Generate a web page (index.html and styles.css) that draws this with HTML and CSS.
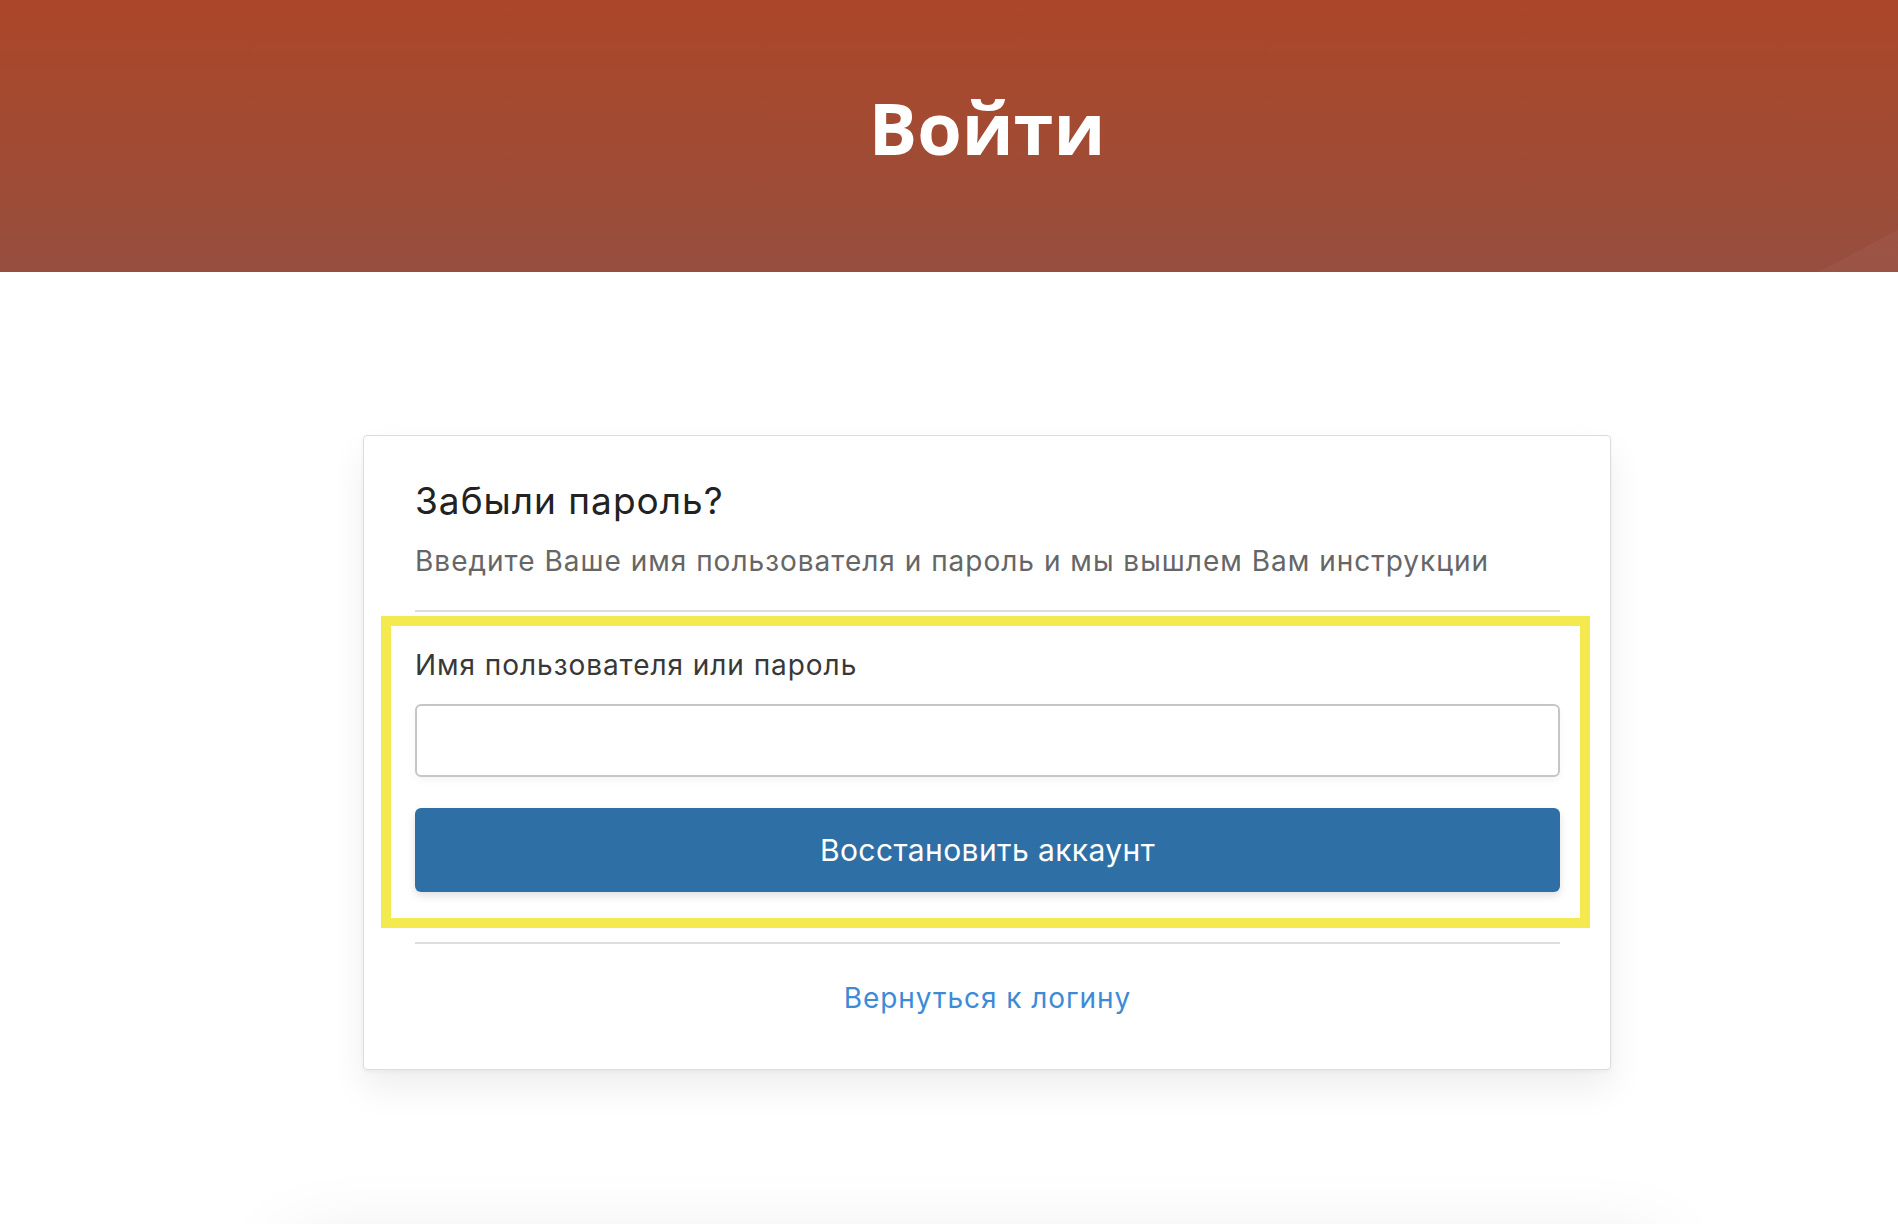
FILE: index.html
```html
<!DOCTYPE html>
<html lang="ru">
<head>
<meta charset="utf-8">
<title>Войти</title>
<link rel="stylesheet" href="styles.css">
</head>
<body>
<header class="banner">
  <h1 class="banner-title">Войти</h1>
</header>
<main class="page">
  <section class="card">
    <div class="card-head">
      <h2 class="card-title">Забыли пароль?</h2>
      <p class="card-sub">Введите Ваше имя пользователя и пароль и мы вышлем Вам инструкции</p>
    </div>
    <form class="recover">
      <label class="field-label" for="user">Имя пользователя или пароль</label>
      <input class="field-input" id="user" type="text">
      <button class="btn-primary" type="button">Восстановить аккаунт</button>
    </form>
    <div class="card-foot">
      <a class="back-link" href="#">Вернуться к логину</a>
    </div>
  </section>
</main>
<div class="page-foot"></div>
</body>
</html>
```
FILE: styles.css
```css
html, body {
  margin: 0;
  padding: 0;
  background: #ffffff;
}
body {
  font-family: Inter, "Open Sans", "Liberation Sans", sans-serif;
  overflow: hidden;
}
.banner {
  box-sizing: border-box;
  height: 272px;
  padding: 91px 0 0 76px;
  background:
    linear-gradient(152deg, rgba(255,255,255,0) 96.7%, rgba(255,255,255,0.035) 96.7%),
    linear-gradient(180deg, #ab4629 0%, #a24b33 50%, #964e3f 100%);
  text-align: center;
}
.banner-title {
  margin: 0;
  font-family: "Open Sans", sans-serif;
  font-weight: 700;
  font-size: 72px;
  line-height: 72px;
  color: #ffffff;
}
.page {
  padding: 163px 0 0 76px;
}
.card {
  box-sizing: border-box;
  width: 1248px;
  margin: 0 auto;
  padding: 0 50px 0 51px;
  background: #fff;
  border: 1px solid #dcdcdc;
  border-radius: 4px;
  box-shadow: 0 18px 36px rgba(0,0,0,0.07), 0 2px 4px rgba(0,0,0,0.04);
}
.card-head {
  padding: 43px 0 29px;
  border-bottom: 2px solid #dddddd;
}
.card-title {
  margin: 0;
  font-weight: 400;
  font-size: 37px;
  line-height: 44px;
  letter-spacing: 1px;
  color: #222222;
}
.card-sub {
  margin: 18px 0 0;
  font-size: 28px;
  line-height: 40px;
  letter-spacing: 1px;
  color: #666666;
}
.recover {
  position: relative;
  display: flex;
  flex-direction: column;
  padding: 35px 0 50px;
  margin: 0;
}
.recover::after {
  content: "";
  position: absolute;
  left: -34px;
  right: -30px;
  top: 4px;
  bottom: 14px;
  border: 10px solid #f4e94f;
  pointer-events: none;
}
.field-label {
  font-size: 28px;
  line-height: 36px;
  letter-spacing: 0.95px;
  color: #383838;
}
.field-input {
  box-sizing: border-box;
  height: 73px;
  margin-top: 21px;
  border: 2px solid #c6c6c6;
  border-radius: 6px;
  background: #fff;
  box-shadow: 0 4px 8px rgba(0,0,0,0.04);
  font: inherit;
}
.btn-primary {
  height: 84px;
  margin-top: 31px;
  border: none;
  border-radius: 6px;
  background: #2e6fa6;
  color: #ffffff;
  font-family: inherit;
  font-size: 30px;
  letter-spacing: 0.4px;
  box-shadow: 0 4px 8px rgba(0,0,0,0.12);
}
.card-foot {
  border-top: 2px solid #dddddd;
  padding: 34px 0 51px;
  text-align: center;
}
.back-link {
  font-size: 28px;
  line-height: 40px;
  letter-spacing: 0.95px;
  color: #3d8bd6;
  text-decoration: none;
}
.page-foot {
  width: 1368px;
  height: 200px;
  margin: 175px 0 0 290px;
  background: #fff;
  box-shadow: 0 0 80px rgba(0,0,0,0.1);
}
```
